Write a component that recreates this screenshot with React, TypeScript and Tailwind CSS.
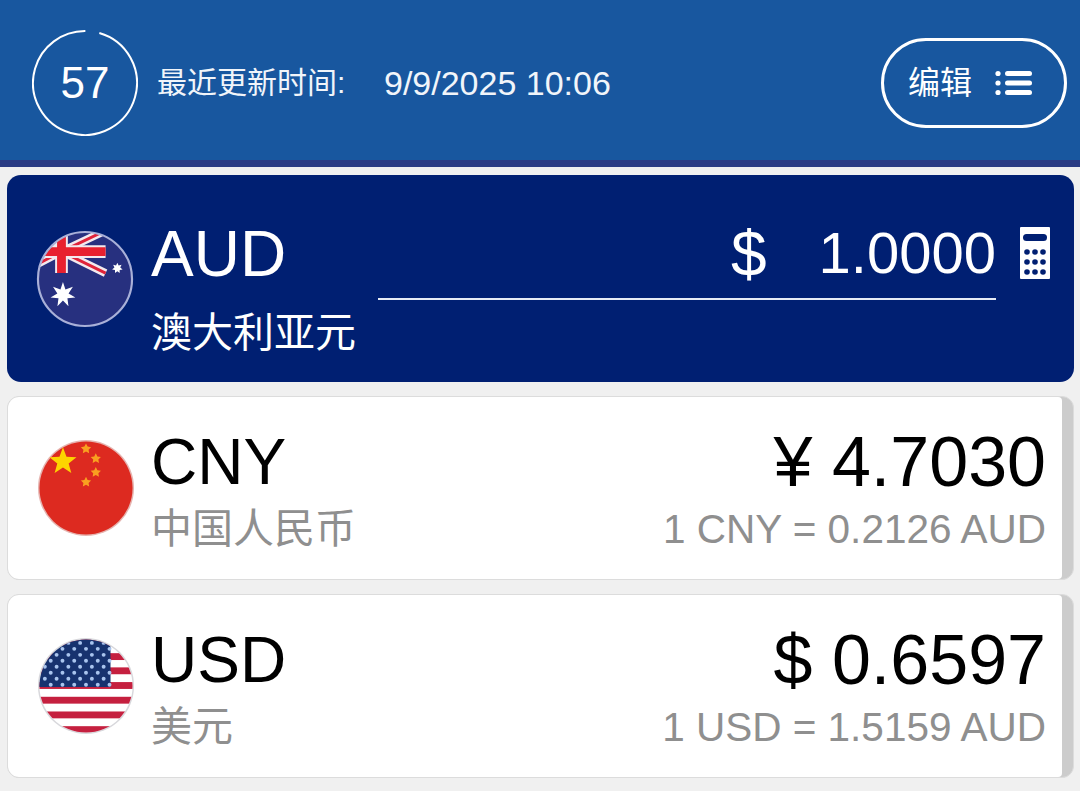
import React from 'react';

const font = "font-['Liberation_Sans','Noto_Sans_CJK_SC',sans-serif]";

const star = (cx: number, cy: number, r: number, points = 5, inner = 0.42) => {
  const out: string[] = [];
  for (let i = 0; i < points * 2; i++) {
    const rad = i % 2 === 0 ? r : r * inner;
    const a = (Math.PI * i) / points - Math.PI / 2;
    out.push(`${(cx + rad * Math.cos(a)).toFixed(2)},${(cy + rad * Math.sin(a)).toFixed(2)}`);
  }
  return out.join(' ');
};

const AuFlag = () => (
  <svg viewBox="0 0 100 100" className="w-[98px] h-[98px] shrink-0">
    <defs>
      <clipPath id="au"><circle cx="50" cy="50" r="48" /></clipPath>
    </defs>
    <g clipPath="url(#au)">
      <rect width="100" height="100" fill="#27307f" />
      {/* union jack */}
      <path d="M26 22 L71 44 M26 22 L68 2 M26 22 L-12 2 M26 22 L-12 42" stroke="#f3e9ee" strokeWidth="8" />
      <path d="M26 22 L71 44 M26 22 L68 2 M26 22 L-12 2 M26 22 L-12 42" stroke="#e0233a" strokeWidth="3" />
      <path d="M26 0 V44 M0 22 H71" stroke="#f3e9ee" strokeWidth="13" />
      <path d="M26 0 V44 M0 22 H71" stroke="#e8202f" strokeWidth="9" />
      <polygon points={star(27.5, 66, 13, 7, 0.45)} fill="#fff" />
      <polygon points={star(83, 39, 5.5, 7, 0.55)} fill="#fff" />
    </g>
    <circle cx="50" cy="50" r="48" fill="none" stroke="#a9b0d8" strokeWidth="2.2" />
  </svg>
);

const CnFlag = () => (
  <svg viewBox="0 0 100 100" className="w-[98px] h-[98px] shrink-0">
    <circle cx="50" cy="50" r="49" fill="#e6b4b0" />
    <circle cx="50" cy="50" r="47.5" fill="#dd2a20" />
    <polygon points={star(26.5, 23, 14.5)} fill="#fdd400" />
    <polygon points={star(50, 10, 5.5, 5, 0.5)} fill="#f9a020" />
    <polygon points={star(60, 20, 5.5, 5, 0.5)} fill="#f9a020" />
    <polygon points={star(60, 34, 5.5, 5, 0.5)} fill="#f9a020" />
    <polygon points={star(50, 44, 5.5, 5, 0.5)} fill="#f9a020" />
  </svg>
);

const UsFlag = () => {
  const stars: React.ReactNode[] = [];
  for (let row = 0; row < 8; row++) {
    const odd = row % 2 === 1;
    for (let col = 0; col < 6; col++) {
      stars.push(<circle key={`${row}-${col}`} cx={(odd ? 14 : 8) + col * 12} cy={6 + row * 6.1} r="2" fill="#a9c4ee" />);
    }
  }
  return (
    <svg viewBox="0 0 100 100" className="w-[98px] h-[98px] shrink-0">
      <defs>
        <clipPath id="us"><circle cx="50" cy="50" r="47.5" /></clipPath>
      </defs>
      <circle cx="50" cy="50" r="49" fill="#d8d8dc" />
      <g clipPath="url(#us)">
        <rect width="100" height="100" fill="#fff" />
        {[2, 16.5, 31, 46, 61, 76, 91].map(y => (
          <rect key={y} x="0" y={y} width="100" height="7" fill="#c5203f" />
        ))}
        <rect x="0" y="0" width="75" height="51" fill="#17326f" />
        {stars}
      </g>
    </svg>
  );
};

const Calculator = () => (
  <svg viewBox="0 0 30 52" className="w-[30px] h-[52px] shrink-0">
    <rect width="30" height="52" rx="1" fill="#fff" />
    <rect x="3" y="7" width="24" height="7" rx="3.5" fill="#001f72" />
    {[25, 35, 45].map(y =>
      [7, 15, 23].map(x => <circle key={`${x}-${y}`} cx={x} cy={y} r="2.8" fill="#001f72" />)
    )}
  </svg>
);

const ListIcon = () => (
  <svg viewBox="0 0 37 26" className="w-[37px] h-[26px]">
    <g fill="#fff">
      <circle cx="3" cy="3.5" r="2.6" />
      <circle cx="3" cy="13" r="2.6" />
      <circle cx="3" cy="22.5" r="2.6" />
      <rect x="10" y="1" width="27" height="5" rx="2.5" />
      <rect x="10" y="10.5" width="27" height="5" rx="2.5" />
      <rect x="10" y="20" width="27" height="5" rx="2.5" />
    </g>
  </svg>
);

const Countdown = () => (
  <div className="relative w-[106px] h-[106px] shrink-0 flex items-center justify-center">
    <svg viewBox="0 0 106 106" className="absolute inset-0 w-full h-full">
      <circle
        cx="53"
        cy="53"
        r="52"
        fill="none"
        stroke="#fff"
        strokeWidth="2"
        strokeDasharray="312 15"
        transform="rotate(-74 53 53)"
      />
    </svg>
    <span className="text-[44px] text-white font-light leading-none">57</span>
  </div>
);

interface RateRowProps {
  flag: React.ReactNode;
  code: string;
  name: string;
  amount: string;
  rate: string;
}

const RateRow = ({ flag, code, name, amount, rate }: RateRowProps) => (
  <div className="h-[184px] rounded-[12px] border border-[#dcdcdc] bg-[#cccccc] overflow-hidden">
    <div className="h-full mr-[11px] bg-white rounded-r-[4px] flex items-center pl-[29px] pr-[16px]">
      {flag}
      <div className="ml-[16px] pt-[6px] flex flex-col">
        <span className="text-[64px] leading-[68px] text-black">{code}</span>
        <span className="text-[41px] leading-[50px] text-[#8f8f8f] mt-[8px]">{name}</span>
      </div>
      <div className="ml-auto pt-[6px] flex flex-col items-end">
        <span className="text-[70px] leading-[68px] text-black whitespace-pre">{amount}</span>
        <span className="text-[40.5px] leading-[50px] text-[#8f8f8f] mt-[8px]">{rate}</span>
      </div>
    </div>
  </div>
);

export default function App() {
  return (
    <div className={`w-[1080px] h-[791px] overflow-hidden bg-[#f0f0f0] ${font}`}>
      <header className="h-[167px] bg-[#18579f] border-b-[7px] border-[#2a3c84] flex items-center pt-[5px] pl-[32px] pr-[13px]">
        <Countdown />
        <span className="ml-[19px] text-[30px] leading-none text-[#f1f5fa] w-[227px] whitespace-nowrap">最近更新时间:</span>
        <span className="text-[34px] leading-none text-[#f1f5fa]">9/9/2025 10:06</span>
        <button className="ml-auto w-[186px] h-[90px] border-[3px] border-white rounded-full flex items-center pl-[24px] gap-[23px] text-white">
          <span className="text-[32px]">编辑</span>
          <ListIcon />
        </button>
      </header>

      <div className="pt-[8px] pl-[7px] pr-[6px] flex flex-col gap-[14px]">
        <section className="h-[207px] rounded-[14px] bg-[#001f72] flex items-center pl-[29px] pr-[24px]">
          <AuFlag />
          <div className="ml-[17px] mt-[20px] flex flex-col">
            <span className="text-[64px] leading-[70px] text-white">AUD</span>
            <span className="text-[41px] leading-[50px] text-white mt-[19px]">澳大利亚元</span>
          </div>
          <div className="ml-[22px] flex-1 self-start mt-[35px] flex items-start">
            <div className="flex-1 h-[90px] border-b-2 border-[#e6ebf5] flex items-center justify-between pl-[353px]">
              <span className="text-[64px] leading-none text-white">$</span>
              <span className="text-[58px] leading-none text-white font-light mb-[3px]">1.0000</span>
            </div>
            <div className="ml-[24px] mt-[17px]">
              <Calculator />
            </div>
          </div>
        </section>

        <RateRow flag={<CnFlag />} code="CNY" name="中国人民币" amount="¥ 4.7030" rate="1 CNY = 0.2126 AUD" />
        <RateRow flag={<UsFlag />} code="USD" name="美元" amount="$ 0.6597" rate="1 USD = 1.5159 AUD" />
      </div>
    </div>
  );
}
